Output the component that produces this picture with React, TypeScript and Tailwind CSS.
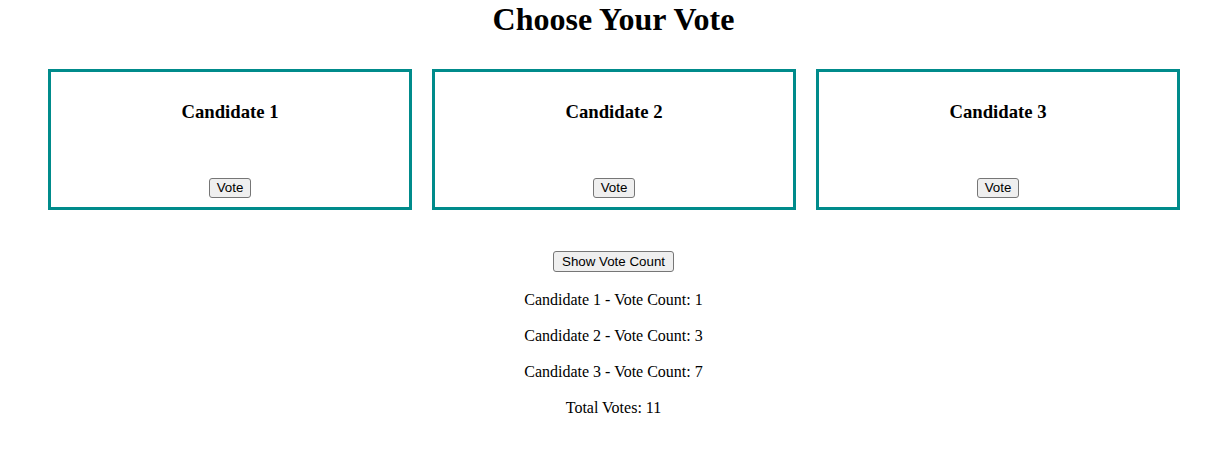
import React from "react";

const btn =
  "bg-[#efefef] border border-[#767676] rounded-[3px] py-[1px] text-[13.33px] leading-[16px] text-black [font-family:'Liberation_Sans',Arial,sans-serif]";

export default function App() {
  const cands = ["Candidate 1", "Candidate 2", "Candidate 3"];
  const counts = [1, 3, 7];
  return (
    <div className="bg-white text-black [font-family:'Liberation_Serif','Times_New_Roman',serif] w-[1219px] h-[457px] pl-[8px]">
      <h1 className="text-[32px] font-bold text-center leading-[38px] m-0">Choose Your Vote</h1>
      <div className="flex pl-[40px] gap-[20px] mt-[31px]">
        {cands.map((c) => (
          <div
            key={c}
            className="w-[364px] h-[141px] border-[3px] border-[#008b8b] flex flex-col items-center"
          >
            <h3 className="text-[18.72px] font-bold leading-[22px] mt-[29px]">{c}</h3>
            <button className={`${btn} px-[7px] mt-[55px]`}>Vote</button>
          </div>
        ))}
      </div>
      <div className="flex flex-col items-center mt-[41px]">
        <button className={`${btn} px-[8px] leading-[17px]`}>Show Vote Count</button>
        <div className="flex flex-col items-center gap-[18px] mt-[19px] text-[16px] leading-[18px]">
          {cands.map((c, i) => (
            <p key={c}>
              {c} - Vote Count: {counts[i]}
            </p>
          ))}
          <p>Total Votes: 11</p>
        </div>
      </div>
    </div>
  );
}
